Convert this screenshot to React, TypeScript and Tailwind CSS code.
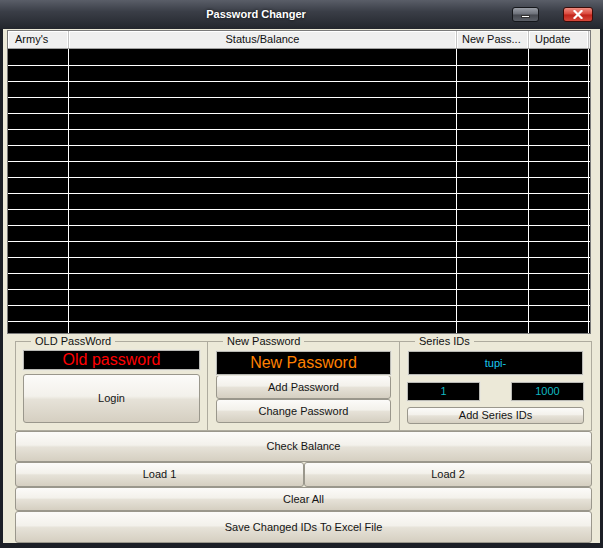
import React from "react";

// ==========================================
// SMALL PIECES
// ==========================================
const Btn = ({ label, className = "" }: { label: string; className?: string }) => (
  <button
    className={`flex items-center justify-center rounded-[3px] border border-[#9a978c] bg-[linear-gradient(to_bottom,#fcfbf9_0%,#f3f1eb_45%,#e6e2d8_52%,#d5cfc1_100%)] text-[11px] leading-none text-[#141414] ${className}`}
  >
    {label}
  </button>
);

const Box = ({ children, className = "" }: { children?: React.ReactNode; className?: string }) => (
  <div
    className={`flex items-center justify-center bg-black border border-[#b9b9b4] outline outline-1 outline-[#e9e7dc] ${className}`}
  >
    {children}
  </div>
);

const cols = [
  { label: "Army's", w: "w-[61px]", align: "justify-start pl-[7px]" },
  { label: "Status/Balance", w: "w-[388px]", align: "justify-center" },
  { label: "New Pass...", w: "w-[72px]", align: "justify-start pl-[5px]" },
  { label: "Update", w: "w-[60px]", align: "justify-start pl-[6px]" },
];

const rows = Array.from({ length: 18 }, (_, i) => i);

// ==========================================
// APP
// ==========================================
export default function App() {
  return (
    <div className="w-[603px] h-[548px] bg-[#1c1f26] flex flex-col overflow-hidden font-['Liberation_Sans',Arial,sans-serif]">
      {/* Title bar */}
      <div className="h-[29px] flex items-start bg-[linear-gradient(to_bottom,#5a5e68_0%,#3a3e47_40%,#23262d_100%)]">
        <div className="flex-1 pt-[8px] text-center text-[11px] font-bold text-white leading-[13px] [text-shadow:0_0_3px_rgba(0,0,0,0.8)]">
          Password Changer
        </div>
        <div className="flex items-start gap-[24px] pt-[7px] pr-[10px]">
          <div className="w-[27px] h-[15px] rounded-[3px] border border-[#15171b] bg-[linear-gradient(to_bottom,#9a9ea6_0%,#6a6e77_48%,#45484f_52%,#5c6068_100%)] flex items-end justify-center pb-[3px]">
            <div className="w-[9px] h-[3px] bg-white border border-[#333]" />
          </div>
          <div className="w-[30px] h-[15px] rounded-[3px] border border-[#3a0c08] bg-[linear-gradient(to_bottom,#f08c80_0%,#d9463a_48%,#c0231a_52%,#d6483b_100%)] flex items-center justify-center">
            <svg width="10" height="9" viewBox="0 0 10 9">
              <path d="M1.5 1 L8.5 8 M8.5 1 L1.5 8" stroke="#fff" strokeWidth="2.2" strokeLinecap="square" />
            </svg>
          </div>
        </div>
      </div>

      {/* Client area */}
      <div className="mx-[3px] h-[514px] bg-[#ece9d8] flex flex-col pt-[1px]">
        {/* List view */}
        <div className="ml-[4px] w-[584px] h-[304px] border border-[#7a7a7a] bg-black flex flex-col">
          <div className="h-[18px] flex bg-[#efefef] border-b border-[#a0a0a0]">
            {cols.map((c) => (
              <div
                key={c.label}
                className={`${c.w} h-full flex items-center text-[11px] text-[#111] border-r border-[#c4c4c4] shadow-[inset_-1px_0_0_#ffffff,inset_1px_1px_0_#ffffff] ${c.align}`}
              >
                {c.label}
              </div>
            ))}
            <div className="flex-1" />
          </div>
          <div className="flex-1 overflow-hidden">
            {rows.map((r) => (
              <div key={r} className={`flex border-b border-white ${r === 0 ? "h-[17px]" : "h-4"}`}>
                {cols.map((c) => (
                  <div key={c.label} className={`${c.w} h-full border-r border-white`} />
                ))}
              </div>
            ))}
          </div>
        </div>

        {/* Group boxes */}
        <div className="ml-[12px] mt-[1px] flex">
          <fieldset className="w-[193px] h-[96px] border border-[#aeab9e] px-[7px]">
            <legend className="ml-[8px] px-[4px] text-[11px] leading-[12px] text-[#111]">OLD PassWord</legend>
            <Box className="mt-[3px] w-[177px] h-[20px]">
              <span className="text-[16px] leading-none text-[#ff0000]">Old password</span>
            </Box>
            <Btn label="Login" className="mt-[4px] w-[177px] h-[49px]" />
          </fieldset>

          <fieldset className="-ml-px w-[193px] h-[96px] border border-[#aeab9e] px-[8px]">
            <legend className="ml-[7px] px-[4px] text-[11px] leading-[12px] text-[#111]">New Password</legend>
            <Box className="mt-[4px] w-[175px] h-[24px]">
              <span className="text-[16px] leading-none text-[#ff8000]">New Password</span>
            </Box>
            <Btn label="Add Password" className="w-[175px] h-[24px]" />
            <Btn label="Change Password" className="w-[175px] h-[24px]" />
          </fieldset>

          <fieldset className="-ml-px w-[193px] h-[96px] border border-[#aeab9e] px-[7px]">
            <legend className="ml-[8px] px-[4px] text-[11px] leading-[12px] text-[#111]">Series IDs</legend>
            <Box className="mt-[4px] ml-[1px] w-[175px] h-[24px]">
              <span className="text-[11px] leading-none text-[#19c6f0]">tupi-</span>
            </Box>
            <div className="mt-[7px] flex justify-between w-[177px]">
              <Box className="w-[73px] h-[19px]">
                <span className="text-[11px] leading-none text-[#10b8c0]">1</span>
              </Box>
              <Box className="w-[73px] h-[19px]">
                <span className="text-[11px] leading-none text-[#10b8c0]">1000</span>
              </Box>
            </div>
            <Btn label="Add Series IDs" className="mt-[6px] w-[177px] h-[17px]" />
          </fieldset>
        </div>

        {/* Bottom buttons */}
        <div className="ml-[12px] w-[577px] flex flex-col">
          <Btn label="Check Balance" className="w-full h-[31px]" />
          <div className="flex">
            <Btn label="Load 1" className="w-[289px] h-[25px]" />
            <Btn label="Load 2" className="w-[288px] h-[25px]" />
          </div>
          <Btn label="Clear All" className="w-full h-[24px]" />
          <Btn label="Save Changed IDs To Excel File" className="w-full h-[32px]" />
        </div>
      </div>
    </div>
  );
}
